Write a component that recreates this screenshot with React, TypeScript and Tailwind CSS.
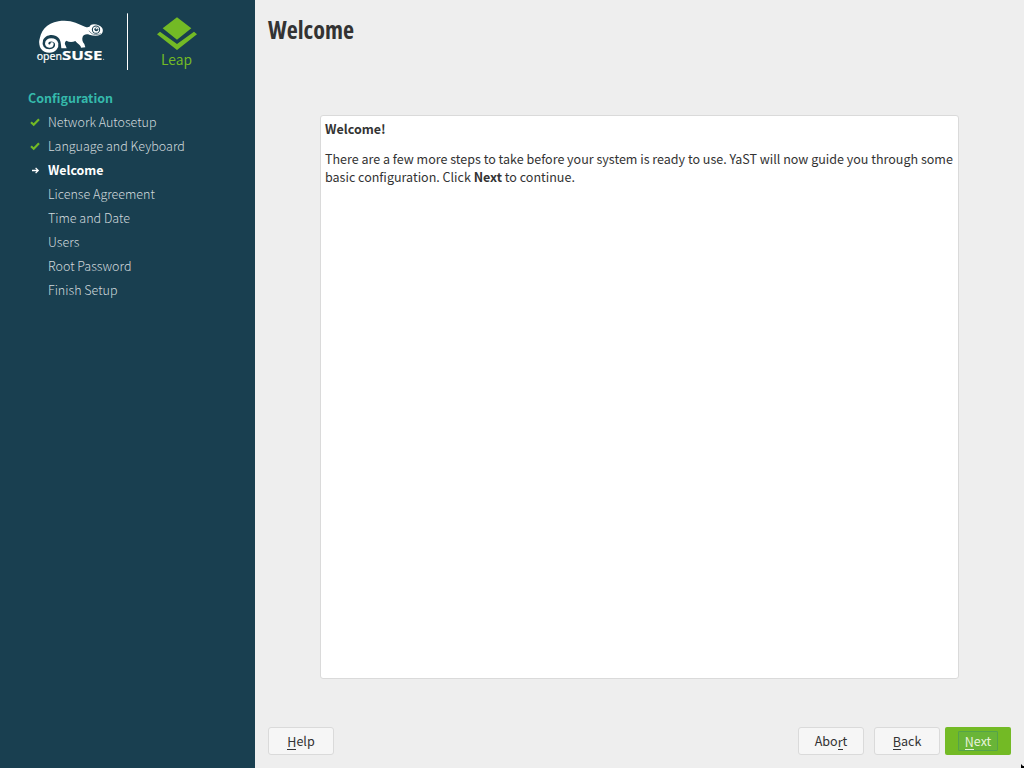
import React from "react";

const UI = "font-['Noto_Sans_CJK_SC','Liberation_Sans',sans-serif]";

function SuseLogo() {
  return (
    <svg className="mt-2 ml-[30px] h-[66px] w-[90px] shrink-0" viewBox="0 0 270 198" aria-label="openSUSE">
      <path
        fill="#fff"
        d="M28 104 C29 70 50 45 85 40 C122 34 142 47 165 56 C173 59 179 58 182 51 C192 45 209 50 216 59 C221 67 218 76 211 80 C202 85 190 84 178 80 C169 77 160 80 158 86 C155 94 158 102 163 108 L166 118 L153 119 C153 112 143 108 136 99 C127 103 118 103 109 98 C104 101 103 107 107 113 L110 121 L94 121 C93 110 93 97 85 89 C72 76 44 79 38 100Z"
      />
      <path
        d="M34 96 C29 114 39 129 58 129 C74 129 82 118 80 107 C76 92 50 92 50 107 C51 116 65 117 66 108"
        fill="none"
        stroke="#fff"
        strokeWidth="10"
        strokeLinecap="round"
      />
      <circle cx="198" cy="65" r="12.5" fill="#193f50" />
      <circle cx="198" cy="65" r="9.3" fill="#fff" />
      <circle cx="199" cy="64" r="5.8" fill="#193f50" />
      <ellipse cx="200" cy="62" rx="3.3" ry="1.8" fill="#fff" />
      <path d="M177 68 C184 80 196 82 213 77" fill="none" stroke="#193f50" strokeWidth="1.6" />
      <text x="20" y="157" fill="#fff" stroke="#fff" strokeWidth="0.5" fontFamily="Noto Sans, sans-serif" fontSize="33" textLength="76" lengthAdjust="spacingAndGlyphs">open</text>
      <text x="96" y="157" fill="#fff" stroke="#fff" strokeWidth="0.6" fontFamily="Noto Sans, sans-serif" fontWeight="700" fontSize="39" textLength="121" lengthAdjust="spacingAndGlyphs">SUSE</text>
      <circle cx="221" cy="154" r="1.7" fill="#c5d0d5" />
    </svg>
  );
}

function LeapLogo() {
  return (
    <svg className="mt-2 h-[66px] w-[90px] shrink-0" viewBox="0 0 270 198" aria-label="Leap">
      <path d="M22.5 16V186" stroke="#fff" strokeWidth="3" />
      <path d="M171 28L214 61L171 95L128 61Z M111 79L120 71L171 108L222 71L231 79L171 126Z" fill="#73ba25" />
      <text x="123" y="171" fill="#73ba25" fontFamily="Noto Sans CJK SC, sans-serif" fontSize="42" textLength="93" lengthAdjust="spacingAndGlyphs">Leap</text>
    </svg>
  );
}

function Check() {
  return (
    <svg className="h-[10px] w-[10px]" viewBox="0 0 10 10">
      <path d="M1 5.2L3.7 7.7L9 2.3" fill="none" stroke="#73ba25" strokeWidth="2.2" />
    </svg>
  );
}

function Arrow() {
  return (
    <svg className="h-[10px] w-[10px]" viewBox="0 0 10 10">
      <path d="M2 5.5H8M5.6 2.9L8.2 5.5L5.6 8.1" fill="none" stroke="#fff" strokeWidth="1.3" />
    </svg>
  );
}

const steps = [
  { name: "Network Autosetup", state: "done" },
  { name: "Language and Keyboard", state: "done" },
  { name: "Welcome", state: "current" },
  { name: "License Agreement", state: "todo" },
  { name: "Time and Date", state: "todo" },
  { name: "Users", state: "todo" },
  { name: "Root Password", state: "todo" },
  { name: "Finish Setup", state: "todo" },
];

function Key({ children }: { children: string }) {
  return <span className="inline-block h-[17px] border-b border-current leading-[18px]">{children}</span>;
}

const button =
  "flex h-7 w-[66px] items-center justify-center rounded-[3px] border border-[#dadada] bg-[#f6f6f6] text-[12.55px] leading-[18px] whitespace-pre text-[#333]";

export default function App() {
  return (
    <div className={`flex h-[768px] w-[1024px] overflow-hidden bg-[#eeeeee] ${UI}`}>
      <aside className="w-[255px] shrink-0 bg-[#193f50]">
        <div className="flex h-[86px]">
          <SuseLogo />
          <LeapLogo />
        </div>
        <h2 className="h-6 pl-7 text-[12.5px] leading-[24px] font-bold text-[#35b9ab]">Configuration</h2>
        <ul className="text-[12.53px] leading-[24px]">
          {steps.map((s) => (
            <li
              key={s.name}
              className={
                s.state === "current"
                  ? "flex h-6 items-center text-[12.4px] leading-[25px] font-bold text-white"
                  : "flex h-6 items-center font-light text-[#d0d9dc]"
              }
            >
              <span className="flex w-12 pl-[30px]">
                {s.state === "done" && <Check />}
                {s.state === "current" && <Arrow />}
              </span>
              <span className="h-6">{s.name}</span>
            </li>
          ))}
        </ul>
      </aside>
      <main className="relative flex grow flex-col">
        <h1 className="h-[115px] pt-[13px] pl-[13px] font-['Open_Sans','Noto_Sans',sans-serif] text-[24.1px] leading-[34px] font-bold text-[#333] [font-stretch:75%]">
          Welcome
        </h1>
        <section className="ml-[65px] h-[564px] w-[639px] rounded-[3px] border border-[#dadada] bg-white px-1 pt-[4px] text-[12.52px] leading-[18px] text-[#333]">
          <p className="font-bold">Welcome!</p>
          <p className="mt-3 whitespace-nowrap">
            There are a few more steps to take before your system is ready to use. YaST will now guide you through some
            <br />
            basic configuration. Click <b>Next</b> to continue.
          </p>
        </section>
        <footer className="mt-12 flex h-7 pl-[13px]">
          <button className={button}><Key>H</Key>elp</button>
          <button className={`${button} ml-[464px]`}>Abo<Key>r</Key>t</button>
          <button className={`${button} ml-[10px]`}><Key>B</Key>ack</button>
          <button className="ml-[5px] flex h-7 w-[66px] items-center justify-center rounded-[2px] bg-[#73ba25] text-[12.55px] leading-[18px] text-[#e8f3dc]">
            <span className="flex h-5 w-10 items-center justify-center rounded-[1px] border border-[#55a34a] bg-[#69b537]">
              <Key>N</Key>ext
            </span>
          </button>
        </footer>
        <svg className="absolute right-0 bottom-0 h-[4px] w-[3px]" viewBox="0 0 3 4">
          <path d="M0 0V4H1.5V2H3V4H0V0L3 3V4H0Z" fill="#000" />
        </svg>
      </main>
    </div>
  );
}
